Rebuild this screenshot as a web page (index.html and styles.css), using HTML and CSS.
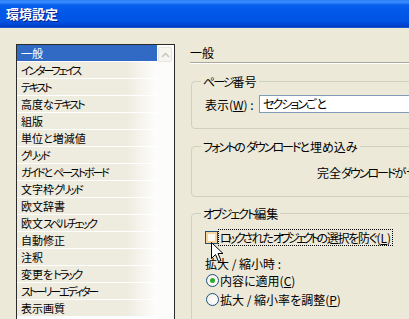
FILE: index.html
```html
<!DOCTYPE html>
<html lang="ja">
<head>
    <meta charset="UTF-8">
    <title>環境設定</title>
    <link rel="stylesheet" href="styles.css">
</head>
<body>
    <div class="titlebar">環境設定</div>
    <div class="dialog">
        <div class="listbox">
            <ul class="items">
                <li class="selected">一般</li>
                <li><span class="kana">インターフェイス</span></li>
                <li><span class="kana">テキスト</span></li>
                <li>高度な<span class="kana">テキスト</span></li>
                <li>組版</li>
                <li>単位と増減値</li>
                <li><span class="kana">グリッド</span></li>
                <li><span class="kana">ガイド</span>と<span class="kana">ペーストボード</span></li>
                <li>文字枠<span class="kana">グリッド</span></li>
                <li>欧文辞書</li>
                <li>欧文<span class="kana">スペルチェック</span></li>
                <li>自動修正</li>
                <li>注釈</li>
                <li>変更を<span class="kana">トラック</span></li>
                <li><span class="kana">ストーリーエディター</span></li>
                <li>表示画質</li>
            </ul>
            <div class="scrollbar">
                <div class="scroll-up">
                    <svg width="9" height="6" viewBox="0 0 9 6"><path d="M1 5 L4.5 1.5 L8 5" fill="none" stroke="#c9c8c0" stroke-width="1.6"/></svg>
                </div>
            </div>
        </div>

        <div class="panel">
            <div class="panel-title">一般</div>

            <fieldset class="group">
                <legend><span class="kana">ページ</span>番号</legend>
                <div class="row">
                    <span class="field-label">表示(<u>W</u>) :</span>
                    <span class="textbox"><span class="kana">セクション</span>ごと</span>
                </div>
            </fieldset>

            <fieldset class="group">
                <legend><span class="kana">フォント</span>の<span class="kana">ダウンロード</span>と埋め込み</legend>
                <div class="row note">完全<span class="kana">ダウンロード</span>が<span class="kana">サポート</span>される<span class="kana">フォント</span></div>
            </fieldset>

            <fieldset class="group">
                <legend><span class="kana">オブジェクト</span>編集</legend>
                <div class="row check-row">
                    <span class="checkbox"></span>
                    <span class="focus"><span class="kana">ロック</span>された<span class="kana">オブジェクト</span>の選択を防ぐ<span class="mnemonic">(<u>L</u>)</span></span>
                </div>
                <div class="sub-label">拡大 / 縮小時 :</div>
                <div class="row radio-row">
                    <span class="radio checked"></span>
                    <span>内容に適用(<u>C</u>)</span>
                </div>
                <div class="row radio-row">
                    <span class="radio"></span>
                    <span>拡大 / 縮小率を調整(<u>P</u>)</span>
                </div>
            </fieldset>
        </div>
    </div>

    <svg class="cursor" width="13" height="21" viewBox="0 0 13 21">
        <path d="M0.5 0.5 L0.5 16.5 L4.5 12.5 L7.5 19.5 L10 18.5 L7 11.5 L12 11.5 Z" fill="#fff" stroke="#000" stroke-width="1"/>
    </svg>
</body>
</html>
```

FILE: styles.css
```css
body {
    margin: 0;
    width: 409px;
    height: 319px;
    overflow: hidden;
    background-color: #ece9d8;
    font-family: "Noto Sans CJK JP", "Liberation Sans", sans-serif;
    font-size: 12px;
    font-feature-settings: "palt";
    color: #000;
    position: relative;
}

.titlebar {
    height: 28px;
    box-sizing: border-box;
    padding: 5px 0 0 6px;
    color: #fff;
    font-size: 13px;
    font-weight: bold;
    line-height: 17px;
    text-shadow: 1px 1px 0 #0a1b8a;
    background: linear-gradient(to bottom, #2a7cf2 0%, #3d90ff 7%, #0760ee 18%, #0057e8 45%, #0054e4 75%, #0046d2 88%, #003cbc 96%, #2d6fe0 100%);
}

.dialog {
    display: flex;
    align-items: flex-start;
    padding: 16px 0 0 16px;
}

/* left category list */
.listbox {
    width: 159px;
    height: 300px;
    flex-shrink: 0;
    box-sizing: border-box;
    border: 1px solid #2b2b2b;
    display: flex;
    background-color: #fff;
}

.items {
    list-style: none;
    margin: 0;
    padding: 0;
    width: 140px;
    font-size: 11px;
}

.items li {
    height: 17px;
    box-sizing: border-box;
    line-height: 16px;
    padding-left: 4px;
    border-bottom: 1px solid #fff;
    white-space: nowrap;
    overflow: hidden;
    background: linear-gradient(to right, #eeebdf 0%, #eeebdf 78%, #f8f7f2 92%, #fdfdfc 100%);
}

.items li.selected {
    background: #316ac5;
    color: #fff;
}

.items .kana {
    letter-spacing: -2.2px;
}

.scrollbar {
    width: 17px;
    background-color: #fcfcfa;
    padding-top: 2px;
    box-sizing: border-box;
}

.scroll-up {
    width: 14px;
    height: 15px;
    margin-left: 1px;
    box-sizing: border-box;
    border: 1px solid #e6e5de;
    border-radius: 2px;
    background-color: #f6f5f0;
    display: flex;
    align-items: center;
    justify-content: center;
}

/* right settings panel */
.panel {
    margin-left: 15px;
    width: 240px;
    flex-shrink: 0;
}

.panel .kana {
    letter-spacing: -2px;
}

.panel-title {
    padding: 1px 0 2px;
    line-height: 15px;
    border-bottom: 1px solid #aca899;
    box-shadow: 0 1px 0 #fff;
    width: 260px;
}

.group {
    margin: 9px 0 0 1px;
    padding: 6px 0 15px 13px;
    width: 260px;
    border: 1px solid #d0d0bf;
    border-radius: 4px;
}

.panel-title + .group {
    margin-top: 11px;
}

.group legend {
    margin-left: -4px;
    padding: 0 2px;
    line-height: 15px;
}

.row {
    display: flex;
    align-items: center;
    height: 18px;
    white-space: nowrap;
}

.field-label {
    width: 54px;
}

.textbox {
    height: 18px;
    box-sizing: border-box;
    flex: 1;
    border: 1px solid #7f9db9;
    background-color: #fff;
    padding-left: 3px;
    line-height: 16px;
}

.note {
    padding-left: 112px;
    padding-top: 1px;
}

.group:nth-of-type(2) {
    margin-top: 10px;
    padding-top: 8px;
}

.group:nth-of-type(3) {
    padding-top: 7px;
}

.checkbox {
    width: 13px;
    height: 13px;
    box-sizing: border-box;
    border: 1px solid #1c5180;
    background: #fdf9ef;
    box-shadow: inset 0 0 0 2px #f8d69b;
}

.focus {
    border: 1px dotted #000;
    padding: 0 1px 0 1px;
    line-height: 15px;
    letter-spacing: -1.3px;
}

.focus .kana {
    letter-spacing: -3.2px;
}

.focus .mnemonic {
    letter-spacing: 0;
}

.sub-label {
    margin-top: 10px;
    line-height: 15px;
}

.radio-row {
    height: 19px;
}

.radio-row:first-of-type {
    margin-top: 1px;
}

.radio {
    width: 13px;
    height: 13px;
    box-sizing: border-box;
    border: 1px solid #1c5180;
    border-radius: 50%;
    background: radial-gradient(circle at 60% 60%, #fff 0%, #ecebe6 100%);
    margin: 0 1px 0 1px;
    position: relative;
}

.radio.checked::after {
    content: "";
    position: absolute;
    left: 3px;
    top: 3px;
    width: 5px;
    height: 5px;
    border-radius: 50%;
    background: #2fa82f;
}

.cursor {
    position: absolute;
    left: 211px;
    top: 242px;
}
```
